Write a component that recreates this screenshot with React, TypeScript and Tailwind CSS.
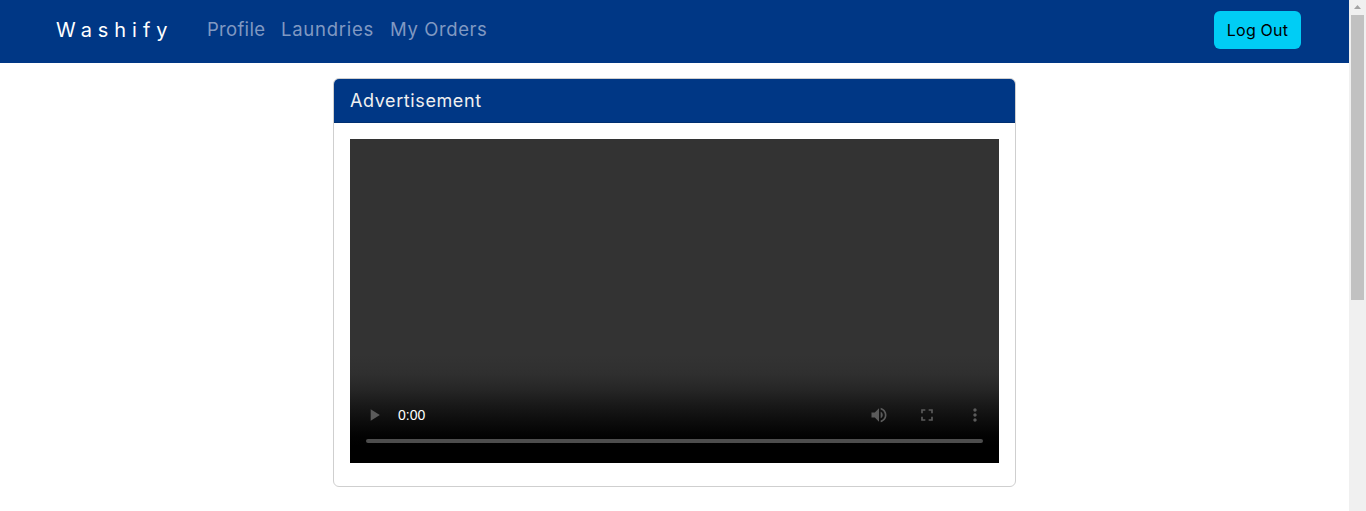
import type { ReactNode } from "react";

function ControlIcon({ children, className }: { children: ReactNode; className: string }) {
  return (
    <svg viewBox="0 0 24 24" className={`size-5 shrink-0 fill-[#5b5b5b] ${className}`}>
      {children}
    </svg>
  );
}

function Navbar() {
  return (
    <nav className="flex h-[63px] items-start bg-[#003785] pl-14 pr-12 whitespace-nowrap">
      <a className="mt-[15px] w-[151px] text-[20px] leading-[30px] tracking-[5.95px] text-white">Washify</a>
      <div className="mt-[15px] flex flex-1 gap-4 text-[18.5px] leading-[28px] text-[#8099c2]">
        <a className="w-[58px] tracking-[0.3px]">Profile</a>
        <a className="w-[93px] tracking-[0.75px]">Laundries</a>
        <a className="w-[98px] tracking-[0.6px]">My Orders</a>
      </div>
      <button className="mt-[11px] h-[38px] w-[87px] rounded-md bg-[#00cdf5] text-[16px] leading-[37px] tracking-[0.2px] text-black">
        Log Out
      </button>
    </nav>
  );
}

function VideoPlayer() {
  return (
    <div className="flex h-[324px] flex-col justify-end bg-[#333333]">
      <div className="flex h-[108px] flex-col justify-end bg-[linear-gradient(to_bottom,#333333_0%,#2f2f2f_18%,#262626_32%,#191919_46%,#0c0c0c_62%,#030303_74%,#000000_84%)]">
        <div className="flex h-5 items-center pr-1">
          <ControlIcon className="ml-[14px]">
            <path d="M8 5v14l11-7z" />
          </ControlIcon>
          <span className="ml-[14px] flex-1 font-['Liberation_Sans',sans-serif] text-[14px] leading-5 text-white">
            0:00
          </span>
          <ControlIcon className="mr-7">
            <path d="M3 9v6h4l5 5V4L7 9H3zm13.5 3c0-1.77-1.02-3.29-2.5-4.03v8.05c1.48-.73 2.5-2.25 2.5-4.02zM14 3.23v2.06c2.89.86 5 3.54 5 6.71s-2.11 5.85-5 6.71v2.06c4.01-.91 7-4.49 7-8.77s-2.99-7.86-7-8.77z" />
          </ControlIcon>
          <ControlIcon className="mr-7">
            <path d="M7 14H5v5h5v-2H7v-3zm-2-4h2V7h3V5H5v5zm12 7h-3v2h5v-5h-2v3zM14 5v2h3v3h2V5h-5z" />
          </ControlIcon>
          <ControlIcon className="mr-[10px]">
            <path d="M12 8c1.1 0 2-.9 2-2s-.9-2-2-2-2 .9-2 2 .9 2 2 2zm0 2c-1.1 0-2 .9-2 2s.9 2 2 2 2-.9 2-2-.9-2-2-2zm0 6c-1.1 0-2 .9-2 2s.9 2 2 2 2-.9 2-2-.9-2-2-2z" />
          </ControlIcon>
        </div>
        <div className="mx-4 mt-[14px] mb-5 h-1 rounded-full bg-[#4d4d4d]" />
      </div>
    </div>
  );
}

function Scrollbar() {
  return (
    <div className="flex w-[17px] flex-col items-center bg-[#f0f0f0]">
      <svg viewBox="0 0 17 15" className="h-[15px] w-[17px] fill-[#a3a3a3]">
        <path d="M5 9h7L8.500 5z" />
      </svg>
      <div className="h-[285px] w-[13px] bg-[#c1c1c1]" />
    </div>
  );
}

export default function App() {
  return (
    <div className="flex h-[511px] overflow-hidden bg-white font-['Inter',sans-serif]">
      <div className="flex-1">
        <Navbar />
        <main className="flex justify-center pt-[15px]">
          <section className="h-[409px] w-[683px] overflow-hidden rounded-md border border-[#cfcfcf]">
            <h2 className="h-11 border-b border-[#002f71] bg-[#003785] px-4 text-[18px] leading-[44px] tracking-[0.6px] text-[#f0f0f0]">
              Advertisement
            </h2>
            <div className="p-4">
              <VideoPlayer />
            </div>
          </section>
        </main>
      </div>
      <Scrollbar />
    </div>
  );
}
